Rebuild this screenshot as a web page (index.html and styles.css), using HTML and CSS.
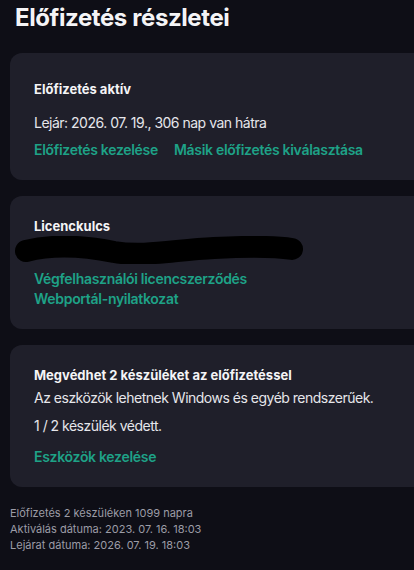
FILE: index.html
```html
<!DOCTYPE html>
<html lang="hu">
<head>
  <meta charset="UTF-8">
  <meta name="viewport" content="width=device-width, initial-scale=1.0">
  <title>Előfizetés részletei</title>
  <link rel="stylesheet" href="styles.css">
</head>
<body>

  <h1 class="page-title">Előfizetés részletei</h1>

  <!-- Állapot -->
  <section class="card card-status">
    <h2 class="card-title">Előfizetés aktív</h2>
    <p class="card-text expiry">Lejár: 2026. 07. 19., 306 nap van hátra</p>
    <div class="link-row">
      <a class="link" href="#">Előfizetés kezelése</a>
      <a class="link" href="#">Másik előfizetés kiválasztása</a>
    </div>
  </section>

  <!-- Licenckulcs (kitakarva) -->
  <section class="card">
    <h2 class="card-title">Licenckulcs</h2>
    <svg class="redacted" width="290" height="28" viewBox="0 0 290 28" aria-hidden="true">
      <path d="M12 15 C40 8 70 10 100 16 C130 21 160 14 200 12 C240 10 265 11 278 13"
            fill="none" stroke="#000" stroke-width="22" stroke-linecap="round"/>
    </svg>
    <div class="link-list">
      <a class="link" href="#">Végfelhasználói licencszerződés</a>
      <a class="link" href="#">Webportál-nyilatkozat</a>
    </div>
  </section>

  <!-- Készülékek -->
  <section class="card">
    <h2 class="card-title">Megvédhet 2 készüléket az előfizetéssel</h2>
    <p class="card-text">Az eszközök lehetnek Windows és egyéb rendszerűek.</p>
    <p class="card-text devices">1 / 2 készülék védett.</p>
    <a class="link manage" href="#">Eszközök kezelése</a>
  </section>

  <div class="footer-info">
    <div>Előfizetés 2 készüléken 1099 napra</div>
    <div>Aktiválás dátuma: 2023. 07. 16. 18:03</div>
    <div>Lejárat dátuma: 2026. 07. 19. 18:03</div>
  </div>

</body>
</html>
```

FILE: styles.css
```css
* {
  box-sizing: border-box;
}
body {
  margin: 0;
  background-color: #0e0e16;
  color: #e6e6ea;
  font-family: Inter, "Noto Sans", sans-serif;
  overflow: hidden;
}
.page-title {
  margin: 0 0 20px;
  padding: 3px 15px 0;
  font-size: 24px;
  line-height: 30px;
  font-weight: 700;
  letter-spacing: -0.4px;
  color: #f4f4f6;
}
/* Карточки */
.card {
  margin: 0 -12px 16px 10px;
  padding: 20px 24px 20px;
  background-color: #1f1f2a;
  border-radius: 12px;
}
.card-status {
  padding-top: 26px;
}
.card-title {
  margin: 0;
  font-size: 13px;
  line-height: 20px;
  font-weight: 700;
  color: #f4f4f6;
}
.card-text {
  margin: 3px 0 0;
  font-size: 14px;
  line-height: 20px;
  letter-spacing: -0.5px;
}
.expiry {
  margin-top: 14px;
}
.devices {
  margin-top: 8px;
}
.link {
  font-size: 14px;
  line-height: 20px;
  font-weight: 600;
  letter-spacing: -0.3px;
  color: #1ea287;
  text-decoration: none;
}
.link-row {
  display: flex;
  gap: 16px;
  margin-top: 7px;
}
.link-list {
  display: flex;
  flex-direction: column;
  margin-top: 5px;
}
.manage {
  display: block;
  margin-top: 11px;
}
.redacted {
  display: block;
  margin-left: -20px;
}
.footer-info {
  padding: 0 10px;
  margin-top: 18px;
  font-size: 11px;
  line-height: 16px;
  color: #9c9ca6;
}
```
